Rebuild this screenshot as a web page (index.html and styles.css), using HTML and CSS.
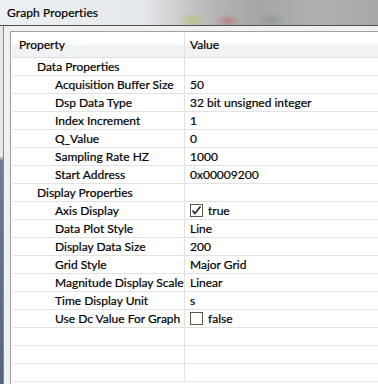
FILE: index.html
```html
<!doctype html>
<html lang="en">
<head>
	<meta charset="utf-8">
	<title>Graph Properties</title>
	<link rel="stylesheet" href="styles.css">
</head>
<body>
	<div class="window">
		<!-- title bar -->
		<div class="titlebar">
			<span class="title">Graph Properties</span>
		</div>

		<div class="frame">
			<div class="rail"></div>
			<div class="panel">
				<div class="row head">
					<div class="cell name">Property</div>
					<div class="cell value">Value</div>
				</div>

				<div class="row">
					<div class="cell name lvl1">Data Properties</div>
					<div class="cell value"></div>
				</div>
				<div class="row">
					<div class="cell name lvl2">Acquisition Buffer Size</div>
					<div class="cell value">50</div>
				</div>
				<div class="row">
					<div class="cell name lvl2">Dsp Data Type</div>
					<div class="cell value">32 bit unsigned integer</div>
				</div>
				<div class="row">
					<div class="cell name lvl2">Index Increment</div>
					<div class="cell value">1</div>
				</div>
				<div class="row">
					<div class="cell name lvl2">Q_Value</div>
					<div class="cell value">0</div>
				</div>
				<div class="row">
					<div class="cell name lvl2">Sampling Rate HZ</div>
					<div class="cell value">1000</div>
				</div>
				<div class="row">
					<div class="cell name lvl2">Start Address</div>
					<div class="cell value">0x00009200</div>
				</div>

				<div class="row">
					<div class="cell name lvl1">Display Properties</div>
					<div class="cell value"></div>
				</div>
				<div class="row">
					<div class="cell name lvl2">Axis Display</div>
					<div class="cell value">
						<span class="check">
							<svg width="11" height="11" viewBox="0 0 11 11"><path d="M1.5 5.5 L4 8.5 L9.5 1.5" fill="none" stroke="#222" stroke-width="1.6"/></svg>
						</span>true
					</div>
				</div>
				<div class="row">
					<div class="cell name lvl2">Data Plot Style</div>
					<div class="cell value">Line</div>
				</div>
				<div class="row">
					<div class="cell name lvl2">Display Data Size</div>
					<div class="cell value">200</div>
				</div>
				<div class="row">
					<div class="cell name lvl2">Grid Style</div>
					<div class="cell value">Major Grid</div>
				</div>
				<div class="row">
					<div class="cell name lvl2">Magnitude Display Scale</div>
					<div class="cell value">Linear</div>
				</div>
				<div class="row">
					<div class="cell name lvl2">Time Display Unit</div>
					<div class="cell value">s</div>
				</div>
				<div class="row">
					<div class="cell name lvl2">Use Dc Value For Graph</div>
					<div class="cell value"><span class="check"></span>false</div>
				</div>

				<div class="row"><div class="cell name"></div><div class="cell value"></div></div>
				<div class="row"><div class="cell name"></div><div class="cell value"></div></div>
				<div class="row"><div class="cell name"></div><div class="cell value"></div></div>
			</div>
		</div>
	</div>
</body>
</html>
```

FILE: styles.css
```css
html, body {
	margin: 0;
	padding: 0;
}

body {
	width: 378px;
	height: 384px;
	overflow: hidden;
	font-family: Lato, "Open Sans", sans-serif;
	font-size: 12px;
	color: #000;
	-webkit-text-stroke: 0.2px #000;
	background: #f0f0f0;
}

.window {
	display: flex;
	flex-direction: column;
	height: 384px;
}

.titlebar {
	height: 25px;
	flex: none;
	display: flex;
	align-items: center;
	padding-left: 7px;
	border-bottom: 1px solid #505050;
	background:
		radial-gradient(ellipse 14px 8px at 192px 20px, rgba(190,190,60,0.45), transparent),
		radial-gradient(ellipse 12px 7px at 228px 21px, rgba(200,60,60,0.4), transparent),
		radial-gradient(ellipse 14px 7px at 272px 20px, rgba(90,130,90,0.3), transparent),
		linear-gradient(to right, #eef1f4 0, #e6e9ec 140px, #b4b4b4 215px, #a6a6a6 260px, #b0b0b0 320px, #a8a8a8 378px);
}

.title {
	letter-spacing: 0.1px;
}

.frame {
	flex: 1;
	display: flex;
	min-height: 0;
}

.rail {
	width: 3px;
	flex: none;
	border-right: 1px solid #8a8a8a;
	background: linear-gradient(to bottom, #e8e8e8 0, #e8e8e8 130px, #6d7d8f 135px, #56667a 100%);
}

.panel {
	flex: 1;
	margin: 5px 0 0 6px;
	border-top: 1px solid #a0a0a8;
	border-left: 1px solid #a0a0a0;
	background: #fff;
	overflow: hidden;
	padding-left: 1px;
}

.row {
	display: flex;
	height: 17px;
	border-bottom: 1px solid #e2e2e2;
	line-height: 18px;
	white-space: nowrap;
}

.row.head {
	height: 25px;
	line-height: 25px;
	border-bottom: 1px solid #e0e0e0;
	background: linear-gradient(to bottom, #ffffff 0, #ffffff 45%, #f1f2f4 55%, #f1f2f4 100%);
}

.cell {
	overflow: hidden;
}

.name {
	width: 172px;
	flex: none;
	border-right: 1px solid #e2e2e2;
	padding-left: 0;
}

.head .name {
	padding-left: 7px;
	width: 165px;
}

.lvl1 {
	padding-left: 25px;
	width: 147px;
}

.lvl2 {
	padding-left: 43px;
	width: 129px;
}

.value {
	flex: 1;
	padding-left: 5px;
	display: flex;
	align-items: center;
}

.check {
	width: 11px;
	height: 11px;
	border: 1px solid #5a5a48;
	background: #fff;
	margin-right: 5px;
	display: inline-flex;
	align-items: center;
	justify-content: center;
	-webkit-text-stroke: 0;
}
```
